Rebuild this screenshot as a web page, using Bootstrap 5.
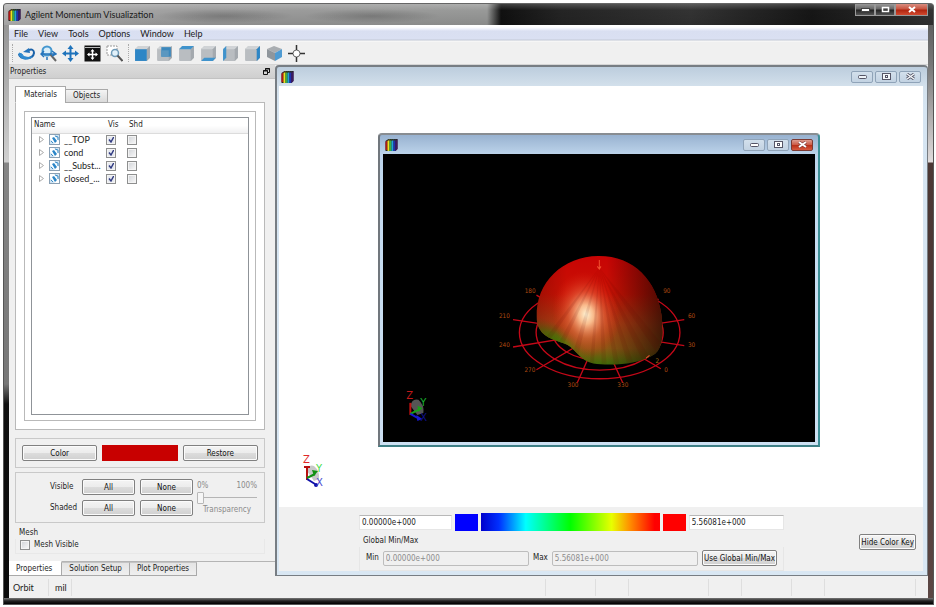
<!DOCTYPE html>
<html lang="en">
<head>
<meta charset="utf-8">
<meta name="viewport" content="width=device-width, initial-scale=1">
<title>Agilent Momentum Visualization</title>
<link href="https://cdn.jsdelivr.net/npm/bootstrap@5.3.0/dist/css/bootstrap.min.css" rel="stylesheet">
<style>
  body { font: 8px/12px "DejaVu Sans Condensed", "DejaVu Sans", sans-serif; color: #1c1c1c; background: #fff; padding: 3px 2px 2px 3px; height: 100vh; }
  .ui-font { font-family: Lato, "Open Sans", sans-serif; font-size: 9px; }
  .app-frame {
    position: relative; padding: 0 5px 6px 5px; border-radius: 4px 4px 0 0; border: 1px solid #555; border-top-color: #666;
    background:
      linear-gradient(#777, #222 50%, #000) bottom / 100% 6px no-repeat,
      linear-gradient(#8d8d8d, #a6a6a6 60px, #d0d0d0 158px, #858585 159px, #777 380px, #111 400px, #0a0a0a) left / 8px 100% no-repeat,
      linear-gradient(#555, #777 60px, #e0dcdc 158px, #4c3835 159px, #4a3735 60%, #5c4744) right / 8px 100% no-repeat;
  }
  .title-row { height: 21px; margin: 0 -5px; padding: 0 5px 0 4px; color: #1a1a1a;
    background:
      linear-gradient(#ffffff33, #ffffff00 30%, #00000018),
      radial-gradient(closest-side, #00000030, #00000000) 150px 5px / 140px 14px no-repeat,
      radial-gradient(closest-side, #00000030, #00000000) 300px 5px / 136px 14px no-repeat,
      linear-gradient(90deg, #b4b4b4, #9c9c9c 22%, #989998 52%, #101010 53.5%, #242424 60%, #333 74%, #161616 87%, #333);
    border-radius: 3px 3px 0 0; }
  .title-row .cap { height: 12px; border: 1px solid #999; border-top: 0; background: linear-gradient(#999, #666 45%, #222 55%, #555); padding: 0; display: flex; align-items: center; justify-content: center; }
  .title-row .cap-close { background: linear-gradient(#d98d80, #c85440 45%, #b02510 55%, #d24a30); }
  .w-cap { width: 20px; } .w-close { width: 33px; }
  .client { background: #f0f0f0; min-height: 0; }
  .main-row { min-height: 0; }
  .menu-row { height: 17px; background: linear-gradient(#fff 0, #fff 2px, #eef1fb 4px, #d9dff1 6px, #dae0f2 14px, #c3c9d6 15px, #f6f6f6 16px); padding-left: 5px; gap: 10px; }
  .menu-row button, .tool-row button, .plain-btn { border: 0; background: none; padding: 0; color: inherit; line-height: 12px; }
  .tool-row { height: 23px; padding: 0 3px; border-bottom: 1px solid #d5d5d5; gap: 5px; }
  .tool-row svg { display: block; }
  .tool-sep { border-left: 1px dotted #aaa; height: 18px; }
  .dock { flex: 0 0 266px; min-width: 0; }
  .dock-head { height: 14px; background: linear-gradient(#dcdcdc, #cfcfcf); border-bottom: 1px solid #c2c2c2; padding: 0 5px 0 1px; }
  .dock-body { padding: 7px 10px 0 6px; min-height: 0; }
  .tab-row { margin-bottom: -1px; position: relative; }
  .tab-row button { border: 1px solid #a9a9a9; background: linear-gradient(#f4f4f4, #dadada); height: 14px; padding: 0 7px; line-height: 12px; color: inherit; }
  .tab-row button.on { background: #fff; border-bottom-color: #fff; height: 17px; padding: 0 8px; margin-right: -1px; }
  .page { background: #fff; border: 1px solid #b9b9b9; padding: 8px; min-height: 0; }
  .page-in { border: 1px solid #b9b9b9; padding: 5px 6px; min-height: 0; }
  .tree { border: 1px solid #8f9398; min-height: 0; }
  .tree table { width: 100%; border-collapse: collapse; table-layout: fixed; }
  .c-arrow { width: 17px; } .c-icon { width: 15px; } .c-name { width: 42px; } .c-vis { width: 21px; }
  .tree th { font-weight: 400; height: 15px; padding: 0 0 0 2px; background: linear-gradient(#fff 50%, #f0f0f1); border-bottom: 1px solid #dcdcdc; vertical-align: middle; white-space: nowrap; }
  .tree td { height: 13px; padding: 0; vertical-align: middle; white-space: nowrap; }
  .chk { appearance: none; display: block; width: 10px; height: 10px; margin: 0; border: 1px solid #8e8f8f; background: linear-gradient(135deg, #cfd2d6, #fafafa); box-shadow: inset 0 0 0 1px #f4f4f4; }
  .chk:checked { background: url("data:image/svg+xml,%3Csvg xmlns='http://www.w3.org/2000/svg' viewBox='0 0 9 9'%3E%3Cpath d='M2 4.5l2 2.5L7 1.5' fill='none' stroke='%23303a80' stroke-width='1.5'/%3E%3C/svg%3E") center / 9px 9px no-repeat, #e6e9ef; }
  .group { border: 1px solid #c9c9c9; }
  .w7 { border: 1px solid #808080; border-radius: 2px; background: linear-gradient(#f4f4f4, #ececec 48%, #dcdcdc 52%, #d0d0d0); box-shadow: inset 0 0 0 1px #fbfbfb; height: 16px; padding: 0 1px; line-height: 13px; color: #111; white-space: nowrap; }
  .swatch-red { background: #c80000; height: 16px; }
  .grid3 { display: grid; grid-template-columns: 1fr 1fr 1fr; gap: 5px; padding: 6px; align-items: center; }
  .vis-grid { display: grid; grid-template-columns: 27px 53px 53px; column-gap: 5px; row-gap: 5px; align-items: center; padding: 6px 0 6px 34px; white-space: nowrap; }
  .slide { width: 60px; color: #8a8a8a; }
  .slide input { appearance: none; width: 100%; height: 12px; margin: 0; display: block; background: linear-gradient(#b5b5b5, #b5b5b5) center / 100% 1px no-repeat; }
  .slide input::-webkit-slider-thumb { appearance: none; width: 7px; height: 12px; border: 1px solid #b8b8b8; border-radius: 1px; background: #f6f6f6; }
  .mesh-box { border: 1px solid #e8e8e8; border-top: 0; padding-bottom: 2px; }
  .dock-tabs { border-top: 1px solid #b4b4b4; margin-top: 7px; }
  .dock-tabs button { border: 1px solid #a9a9a9; border-top-color: #c4c4c4; background: linear-gradient(#e4e4e4, #efefef); height: 14px; padding: 0 7px; margin-left: -1px; color: inherit; line-height: 12px; }
  .dock-tabs button.on { background: #fff; border-top-color: #fff; height: 15px; margin-top: -1px; margin-left: 0; padding: 0 9px 0 7px; border-left: 0; }
  .mdi { border: 1px solid #777d83; border-width: 2px 1px 1px 2px; border-radius: 4px 4px 0 0; background: linear-gradient(#bccddd, #d4e1ec 20px, #d6e5f2 40px, #d9e7f3); padding: 0 4px 4px 2px; min-width: 0; }
  .cap-row { height: 19px; padding: 0 2px; }
  .caps { gap: 2px; }
  .cap2 { width: 22px; height: 12px; border: 1px solid #8fa3b8; border-radius: 2px; background: linear-gradient(#d3e0ec, #c2d2e2); padding: 0; display: flex; align-items: center; justify-content: center; }
  .cap-red { background: linear-gradient(#dd9d91, #cc5a45 48%, #b92e16 52%, #d75a40); border-color: #7c3a33; }
  .workspace { position: relative; background: #fff; min-height: 0; overflow: hidden; }
  .child { position: absolute; left: 99px; top: 47px; width: 442px; height: 314px; border: 2px solid #71777d; border-color: #888d92 #3d8f96 #3f8086 #71777d; border-radius: 4px 4px 0 0; background: linear-gradient(#98b2d0, #bcd3ea 19px, #c4dbf0 60px, #cde0f2); padding: 0 3px 3px 3px; }
  .axes { position: absolute; left: 22px; bottom: 16px; }
  .scene { background: #000; display: block; width: 100%; min-height: 0; }
  .key-row { padding: 6px 7px 0 80px; }
  .key-main { flex: 0 1 425px; min-width: 0; }
  .key-top { display: grid; grid-template-columns: 93fr 23px 178fr 23px 95fr; gap: 3px; align-items: center; }
  .key-in { border: 1px solid #e6e6e6; border-top-color: #b8b8b8; background: #fff; height: 15px; padding: 0 2px; min-width: 0; color: #222; line-height: 12px; }
  .key-in:disabled { background: #f0f0f0; border-color: #bdbdbd; color: #8c8c8c; border-radius: 2px; }
  .ramp { height: 18px; background: linear-gradient(90deg, #00c 0, #0030ff 10%, #00ffff 25%, #00ff00 50%, #e8ff00 73%, #ff9000 83%, #ff0000 97%); }
  .end-sw { height: 17px; }
  .sw-min { background: #00f; } .sw-max { background: #f00; }
  .key-box { border: 1px solid #e6e6e6; border-top: 0; padding: 3px 6px 4px 6px; }
  .status-row { height: 22px; }
  .status-row span { border-right: 1px solid #dedede; height: 17px; line-height: 17px; }
  .s-mode { width: 40px; padding-left: 4px; } .s-unit { width: 23px; padding-left: 6px; } .s-main { flex: 0 1 474px; }
  .s-50 { width: 50px; } .s-33 { width: 33px; } .s-80 { width: 80px; } .s-91 { width: 91px; }
</style>
</head>
<body class="d-flex">
<svg width="0" height="0" class="position-absolute">
  <symbol id="logo" viewBox="0 0 12 12">
    <path d="M0 2L3 0H12V10L10 12H0Z" fill="#222"/>
    <path d="M0 3L2 1V11H0Z" fill="#b01818"/><path d="M2 2L4 0V12H2Z" fill="#f0e020"/><path d="M4 2L6 0V12H4Z" fill="#3ab040"/>
    <path d="M6 2L8 0V12H6Z" fill="#1fa0d8"/><path d="M8 2L10 0V12H8Z" fill="#2030b0"/><path d="M10 2L12 0V10L10 12Z" fill="#401860"/>
    <path d="M1 2L3 0H12L10 2Z" fill="#332" opacity=".45"/>
  </symbol>
  <symbol id="cube" viewBox="0 0 16 16">
    <path d="M1 4Q1 3 2 3L4 1H14Q15 1 15 2V12L12 15H2Q1 15 1 14Z" fill="#b9bdc1"/>
    <path d="M1 4L4 1H15L12 4Z" fill="#d0d3d6"/><path d="M12 4L15 1V12L12 15Z" fill="#a4a9ae"/>
  </symbol>
  <symbol id="matl" viewBox="0 0 11 11">
    <rect x=".5" y=".5" width="10" height="10" fill="#cfe4f4" stroke="#8aa0b4"/>
    <path d="M1 1h4l5 6v3H6L1 5z" fill="#fff"/><path d="M3 4l2-1 3 4-2 2z" fill="#2b86c8"/><path d="M6 2l3 1v3M2 7l2 2" stroke="#3c8ec8" fill="none"/>
  </symbol>
</svg>
<div class="app-frame d-flex flex-column flex-fill">
  <header class="title-row ui-font d-flex align-items-center">
    <svg width="13" height="12" class="me-1"><use href="#logo"/></svg>
    <span class="flex-fill">Agilent Momentum Visualization</span>
    <div class="d-flex align-self-start">
      <button class="cap w-cap" aria-label="Minimize"><svg width="9" height="4"><rect x=".5" y=".5" width="8" height="3" fill="#fff" stroke="#444"/></svg></button>
      <button class="cap w-cap" aria-label="Maximize"><svg width="9" height="7"><rect x="1.500" y="1.500" width="6" height="4" fill="none" stroke="#fff" stroke-width="1.500"/></svg></button>
      <button class="cap cap-close w-close" aria-label="Close"><svg width="8" height="7"><path d="M1 1l6 5M7 1L1 6" stroke="#fff" stroke-width="2"/></svg></button>
    </div>
  </header>
  <div class="client d-flex flex-column flex-fill">
    <nav class="menu-row ui-font d-flex align-items-center">
      <button>File</button><button>View</button><button>Tools</button><button>Options</button><button>Window</button><button>Help</button>
    </nav>
    <div class="tool-row d-flex align-items-center">
      <span class="tool-sep"></span>
      <button aria-label="Orbit"><svg width="17" height="17" viewBox="0 0 17 17"><path d="M1 9C1 15 15 15 16 8C16 5 14 4 11 5" fill="none" stroke="#1b62a8" stroke-width="2"/><path d="M1 8c0 6 8 8 13 4c-4 1-9 0-10-3z" fill="#2f8ad0" stroke="#2f8ad0"/><path d="M5 7l6-4 1 5z" fill="#2574bc"/></svg></button>
      <button aria-label="Zoom"><svg width="17" height="17" viewBox="0 0 17 17"><circle cx="7" cy="6" r="4.500" fill="#d8edf9" stroke="#4597cf" stroke-width="2"/><path d="M10 9l6 7" stroke="#666" stroke-width="2"/><path d="M1 9h14M4 6L1 9l3 3M12 6l4 3-4 2M7 12v3" stroke="#2574bc" stroke-width="1.500" fill="none"/></svg></button>
      <button aria-label="Pan"><svg width="17" height="17" viewBox="0 0 17 17"><path d="M8.500 3v11M3 8.500h11" stroke="#1e73bb" stroke-width="2"/><path d="M8.500 0l3 4h-6zM8.500 17l3-4h-6zM0 8.500l4-3v6zM17 8.500l-4-3v6z" fill="#1e73bb"/></svg></button>
      <button aria-label="Fit all"><svg width="17" height="17" viewBox="0 0 17 17"><rect x=".5" y=".5" width="16" height="16" fill="#111"/><path d="M1 2.500h15" stroke="#bbb"/><path d="M8.500 5v9M4 9.500h9" stroke="#fff" stroke-width="1.500"/><path d="M8.500 4l2 2.500h-4zM8.500 15l2-2.500h-4zM3 9.500l2.500-2v4zM14 9.500l-2.500-2v4z" fill="#fff"/></svg></button>
      <button aria-label="Zoom area"><svg width="17" height="17" viewBox="0 0 17 17"><path d="M1 1h10v9H1z" fill="#fff" stroke="#999" stroke-dasharray="2 1"/><circle cx="9" cy="8" r="3.500" fill="#e2f1fa" stroke="#6e9ab8" stroke-width="1.500"/><path d="M11.500 10.500l5 5.500" stroke="#555" stroke-width="2"/></svg></button>
      <span class="tool-sep"></span>
      <button aria-label="Front"><svg width="17" height="17" viewBox="0 0 16 16"><use href="#cube"/><path d="M1 4h11v11H1z" fill="#2d86c6"/></svg></button>
      <button aria-label="Back"><svg width="17" height="17" viewBox="0 0 16 16"><use href="#cube"/><path d="M5 2h9v9H5z" fill="#3c88bd"/><path d="M5 5h7v6H5z" fill="#5b97c0"/></svg></button>
      <button aria-label="Top"><svg width="17" height="17" viewBox="0 0 16 16"><use href="#cube"/><path d="M1 4L4 1H15L12 4Z" fill="#3f93cc"/></svg></button>
      <button aria-label="Bottom"><svg width="17" height="17" viewBox="0 0 16 16"><use href="#cube"/><path d="M1 15L4 12H15L12 15Z" fill="#3f93cc"/></svg></button>
      <button aria-label="Left"><svg width="17" height="17" viewBox="0 0 16 16"><use href="#cube"/><path d="M1 4L4 1V12L1 15Z" fill="#3f93cc"/></svg></button>
      <button aria-label="Right"><svg width="17" height="17" viewBox="0 0 16 16"><use href="#cube"/><path d="M12 4L15 1V12L12 15Z" fill="#2d86c6"/></svg></button>
      <button aria-label="Isometric"><svg width="17" height="17" viewBox="0 0 17 17"><path d="M1 4L8 1L16 4L9 8z" fill="#a9adb1"/><path d="M1 4l8 4v8l-8-4z" fill="#8f969c"/><path d="M9 8l7-4v8l-7 4z" fill="#4f9bd2"/></svg></button>
      <button aria-label="Center"><svg width="17" height="17" viewBox="0 0 17 17"><circle cx="8.500" cy="8.500" r="3.500" fill="#fff" stroke="#666"/><path d="M8.500 0v5M8.500 12v5M0 8.500h5M12 8.500h5" stroke="#333" stroke-width="1.500"/></svg></button>
    </div>
    <div class="main-row d-flex flex-fill">
      <aside class="dock d-flex flex-column">
        <div class="dock-head d-flex justify-content-between align-items-center"><span>Properties</span>
          <button class="plain-btn" aria-label="Float"><svg width="7" height="7" class="d-block"><path d="M2.500 2V.5h4v4H5M.5 2.500h4v4h-4z" fill="none" stroke="#111"/><path d="M2 1h5M0 3h5" stroke="#111"/></svg></button></div>
        <div class="dock-body d-flex flex-column flex-fill">
          <div class="tab-row d-flex align-items-end"><button class="on">Materials</button><button>Objects</button></div>
          <div class="page d-flex flex-column flex-fill">
            <div class="page-in d-flex flex-column flex-fill"><div class="tree flex-fill">
              <table>
                <colgroup><col class="c-arrow"><col class="c-icon"><col class="c-name"><col class="c-vis"><col></colgroup>
                <thead><tr><th colspan="3">Name</th><th>Vis</th><th>Shd</th></tr></thead>
                <tbody id="rows"></tbody>
              </table>
            </div></div>
          </div>
          <div class="group grid3 mt-2"><button class="w7">Color</button><div class="swatch-red"></div><button class="w7">Restore</button></div>
          <div class="group d-flex align-items-center mt-1">
            <div class="vis-grid"><span>Visible</span><button class="w7">All</button><button class="w7">None</button><span>Shaded</span><button class="w7">All</button><button class="w7">None</button></div>
            <div class="slide ms-1"><div class="d-flex justify-content-between"><span>0%</span><span>100%</span></div>
              <input type="range" value="0" disabled id="tr"><label for="tr" class="d-block text-center">Transparency</label></div>
          </div>
          <div class="mt-1 ms-1">Mesh</div>
          <div class="mesh-box d-flex align-items-center gap-1"><input class="chk ms-1" type="checkbox" id="mesh"><label for="mesh">Mesh Visible</label></div>
        </div>
        <div class="dock-tabs d-flex align-items-start"><button class="on">Properties</button><button>Solution Setup</button><button>Plot Properties</button></div>
      </aside>
      <main class="mdi d-flex flex-column flex-fill">
        <div class="cap-row d-flex align-items-center">
          <svg width="13" height="12" class="me-auto"><use href="#logo"/></svg>
          <div class="caps d-flex">
            <button class="cap2" aria-label="Minimize"><svg width="9" height="5"><rect x=".5" y="1.500" width="8" height="3" rx="1" fill="#eef3f8" stroke="#556"/></svg></button>
            <button class="cap2" aria-label="Maximize"><svg width="9" height="7"><rect x=".5" y=".5" width="8" height="6" fill="#f4f7fa" stroke="#556"/><rect x="3.500" y="2.500" width="2" height="2" fill="none" stroke="#556"/></svg></button>
            <button class="cap2" aria-label="Close"><svg width="9" height="7"><path d="M1 1l7 5M8 1L1 6" stroke="#556" stroke-width="3"/><path d="M1 1l7 5M8 1L1 6" stroke="#f4f7fa" stroke-width="1.500"/></svg></button>
          </div>
        </div>
        <div class="workspace flex-fill">
          <section class="child d-flex flex-column">
            <div class="cap-row d-flex align-items-center">
              <svg width="13" height="12" class="me-auto"><use href="#logo"/></svg>
              <div class="caps d-flex">
                <button class="cap2" aria-label="Minimize"><svg width="9" height="5"><rect x=".5" y="1.500" width="8" height="3" rx="1" fill="#fff" stroke="#556"/></svg></button>
                <button class="cap2" aria-label="Maximize"><svg width="9" height="7"><rect x=".5" y=".5" width="8" height="6" fill="#fff" stroke="#556"/><rect x="3.500" y="2.500" width="2" height="2" fill="none" stroke="#556"/></svg></button>
                <button class="cap2 cap-red" aria-label="Close"><svg width="9" height="7"><path d="M1 1l7 5M8 1L1 6" stroke="#733" stroke-width="3"/><path d="M1 1l7 5M8 1L1 6" stroke="#fff" stroke-width="2"/></svg></button>
              </div>
            </div>
            <svg class="scene flex-fill" viewBox="0 0 432 287" preserveAspectRatio="xMidYMid slice">
              <defs>
                <linearGradient id="dBase" x1="0" y1="0" x2="0" y2="1"><stop offset="0" stop-color="#c80404"/><stop offset=".35" stop-color="#c81204"/><stop offset=".62" stop-color="#b04014"/><stop offset=".85" stop-color="#8a5814"/><stop offset="1" stop-color="#3f6a08"/></linearGradient>
                <linearGradient id="dSide" x1="0" y1="0" x2="1" y2="0"><stop offset="0" stop-color="#300" stop-opacity=".3"/><stop offset=".25" stop-color="#300" stop-opacity="0"/><stop offset=".55" stop-color="#200" stop-opacity="0"/><stop offset="1" stop-color="#150400" stop-opacity=".75"/></linearGradient>
                <radialGradient id="dHi" gradientUnits="userSpaceOnUse" cx="0" cy="0" r="100" gradientTransform="translate(288 228) rotate(-8) scale(1 1.300)"><stop offset="0" stop-color="#fff4d4"/><stop offset=".22" stop-color="#ffc898" stop-opacity=".92"/><stop offset=".55" stop-color="#f07048" stop-opacity=".5"/><stop offset="1" stop-color="#e02010" stop-opacity="0"/></radialGradient>
                <radialGradient id="dGreen" gradientUnits="userSpaceOnUse" cx="0" cy="0" r="100" gradientTransform="translate(195 320) rotate(32) scale(1.300 .6)"><stop offset="0" stop-color="#2f8a00"/><stop offset=".5" stop-color="#4c7a08" stop-opacity=".75"/><stop offset="1" stop-color="#805010" stop-opacity="0"/></radialGradient>
                <path id="dome" d="M141 235C138 130 220 54 325 53C430 52 500 125 514 230C520 285 518 325 495 345C455 375 365 383 310 374C270 365 258 333 232 318C205 307 165 300 150 272C142 260 141 248 141 235Z"/>
                <clipPath id="dClip"><use href="#dome"/></clipPath>
              </defs>
              <g transform="translate(107 84) scale(.3333)">
                <g fill="none" stroke="#c40818" stroke-width="4">
                  <ellipse cx="329" cy="282" rx="240" ry="138"/><ellipse cx="329" cy="282" rx="190" ry="112"/><ellipse cx="329" cy="282" rx="140" ry="82"/>
                  <path d="M70 243L329 282L582 243M70 325L329 282L582 321M140 393L329 282L505 182M262 432L329 282L398 432M329 282L512 390M329 282L140 170"/>
                </g>
                <use href="#dome" fill="url(#dBase)"/>
                <g clip-path="url(#dClip)">
                  <rect x="130" y="40" width="400" height="350" fill="url(#dGreen)"/>
                  <rect x="130" y="40" width="400" height="350" fill="url(#dSide)"/>
                  <rect x="130" y="40" width="400" height="350" fill="url(#dHi)"/>
                  <g fill="#500" opacity=".1"><path d="M328 88L165 300L180 305zM328 88L205 315L220 320zM328 88L250 340L265 350zM328 88L300 370L312 374zM328 88L335 380L350 380zM328 88L372 380L388 378zM328 88L412 376L430 372zM328 88L455 362L475 352zM328 88L495 335L510 310z"/></g>
                </g>
                <path d="M328 65v24M322 84l6 8 5-8M468 358l10-8" stroke="#f05030" stroke-width="3" fill="none"/>
                <g fill="#b04a10" font-family="DejaVu Sans Condensed, sans-serif" font-size="19">
                  <text x="105" y="163">180</text><text x="519" y="163">90</text><text x="28" y="239">210</text><text x="593" y="239">60</text><text x="28" y="325">240</text><text x="593" y="325">30</text><text x="104" y="401">270</text><text x="522" y="400">0</text><text x="233" y="444">300</text><text x="382" y="444">330</text><text x="496" y="374" fill="#a07010">2</text>
                </g>
              </g>
              <g transform="translate(23 233)" font-family="DejaVu Sans, sans-serif" font-size="10">
                <path d="M5 18q2-8 8-6q6 5 5 13l-6 2z" fill="#555"/><path d="M5 15v12" stroke="#c01010" stroke-width="2"/><path d="M5 26l10-5" stroke="#18a018" stroke-width="2"/><path d="M12 18l5 2-4 4z" fill="#18a018"/><path d="M5 26l9 5" stroke="#1818d0" stroke-width="2"/><path d="M11 27l6 4-5 2z" fill="#1818d0"/>
                <text x="1" y="11" fill="#c01818">Z</text><text x="15" y="18" fill="#18b030">Y</text><text x="15" y="33" fill="#101088">X</text>
              </g>
            </svg>
          </section>
          <svg class="axes" width="28" height="38" viewBox="0 0 28 38" font-family="DejaVu Sans, sans-serif" font-size="10">
            <path d="M6 18q2-7 7-5q6 5 5 13l-5 2z" fill="#c8c8c8"/><path d="M6 14v13" stroke="#b81010" stroke-width="2"/><path d="M3 14h6" stroke="#b81010" stroke-width="2"/><path d="M6 25l8-4" stroke="#109010" stroke-width="2"/><path d="M11 17l6 1-4 5z" fill="#109010"/><path d="M6 26l8 5" stroke="#1010a8" stroke-width="2"/><circle cx="15" cy="32" r="2" fill="#1010a8"/>
            <text x="2" y="10" fill="#e02828">Z</text><text x="15" y="19" fill="#48e048">Y</text><text x="15" y="33" fill="#4848d0">X</text>
          </svg>
        </div>
        <div class="client key-row d-flex align-items-center justify-content-between">
          <div class="key-main d-flex flex-column">
            <div class="key-top">
              <input class="key-in" value="0.00000e+000" aria-label="Key minimum">
              <div class="end-sw sw-min"></div>
              <div class="ramp"></div>
              <div class="end-sw sw-max"></div>
              <input class="key-in" value="5.56081e+000" aria-label="Key maximum">
            </div>
            <div class="mt-1 ps-1">Global Min/Max</div>
            <div class="key-box d-flex align-items-center gap-1">
              <label for="gmin">Min</label><input id="gmin" class="key-in flex-fill" disabled value="0.00000e+000">
              <label for="gmax">Max</label><input id="gmax" class="key-in flex-fill" disabled value="5.56081e+000">
              <button class="w7">Use Global Min/Max</button>
            </div>
          </div>
          <button class="w7">Hide Color Key</button>
        </div>
      </main>
    </div>
    <footer class="status-row ui-font d-flex align-items-center"><span class="s-mode">Orbit</span><span class="s-unit">mil</span><span class="s-main"></span><span class="s-50"></span><span class="s-33"></span><span class="s-80"></span><span class="s-33"></span><span class="s-50"></span><span class="s-33"></span><span class="s-91"></span></footer>
  </div>
</div>
<script src="https://cdn.jsdelivr.net/npm/bootstrap@5.3.0/dist/js/bootstrap.bundle.min.js"></script>
<script>
  document.getElementById('rows').innerHTML = ['__TOP', 'cond', '__Subst...', 'closed_...'].map(n =>
    `<tr><td class="ps-1"><svg width="12" height="7" class="d-block"><path d="M3.500 .5v6l4-3z" fill="#fff" stroke="#aaa"/></svg></td>
     <td><svg width="11" height="11" class="d-block"><use href="#matl"/></svg></td><td class="ui-font">${n}</td>
     <td><input class="chk" type="checkbox" checked aria-label="${n} visible"></td>
     <td><input class="chk" type="checkbox" aria-label="${n} shaded"></td></tr>`).join('');
</script>
</body>
</html>
